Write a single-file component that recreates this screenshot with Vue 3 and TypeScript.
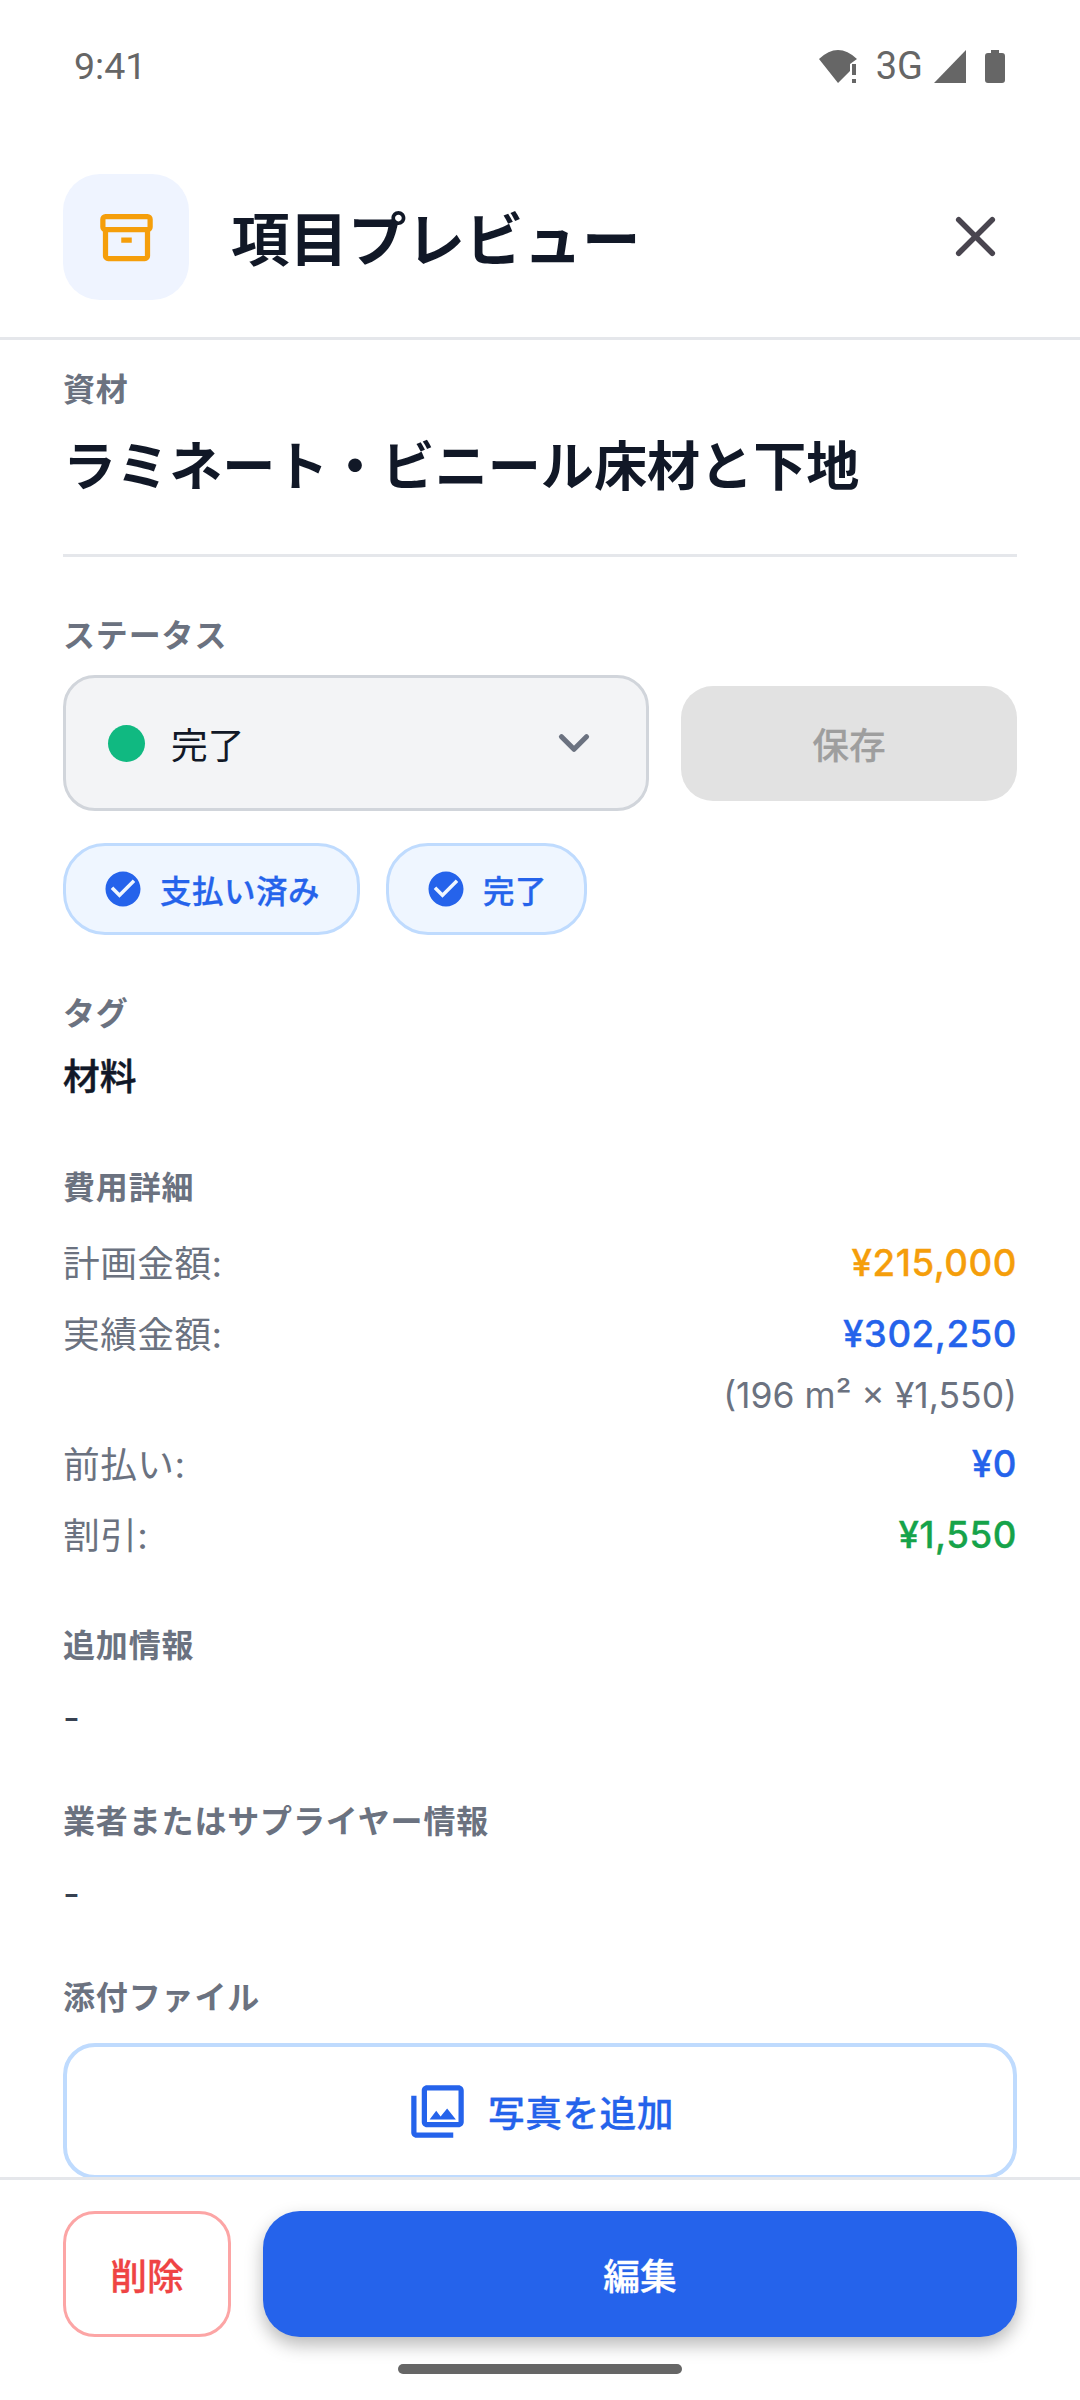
<script setup lang="ts">
const costs = [
  { label: '計画金額:', value: '¥215,000', tone: 'orange' },
  { label: '実績金額:', value: '¥302,250', tone: 'blue', note: '(196 m² × ¥1,550)' },
  { label: '前払い:', value: '¥0', tone: 'blue' },
  { label: '割引:', value: '¥1,550', tone: 'green' },
]
const chips = ['支払い済み', '完了']
</script>

<template>
  <div class="screen">
    <div class="status">
      <span class="time">9:41</span>
      <div class="status-icons">
        <svg width="38" height="33" viewBox="0 0 38 33">
          <path d="M0 9 Q19 -9 38 9 L31 14 V21 L19 33 Z" fill="#666" />
          <rect x="33" y="14" width="4" height="11" fill="#666" />
          <rect x="33" y="29" width="4" height="4" fill="#666" />
        </svg>
        <span class="net">3G</span>
        <svg class="signal" width="32" height="33" viewBox="0 0 32 33"><path d="M32 0 V33 H0 Z" fill="#666" /></svg>
        <svg class="battery" width="20" height="33" viewBox="0 0 20 33">
          <path d="M6 0 H14 V3 H17 Q20 3 20 6 V30 Q20 33 17 33 H3 Q0 33 0 30 V6 Q0 3 3 3 H6 Z" fill="#666" />
        </svg>
      </div>
    </div>

    <header class="head">
      <div class="head-icon">
        <svg width="63" height="63" viewBox="0 0 24 24" fill="none" stroke="#f59e0b" stroke-width="2" stroke-linejoin="round">
          <rect x="3" y="4" width="18" height="5" rx="1" />
          <path d="M4 9 V19 a1 1 0 0 0 1 1 H19 a1 1 0 0 0 1 -1 V9" />
          <path d="M10 13 H14" />
        </svg>
      </div>
      <h1>項目プレビュー</h1>
      <svg class="close" width="63" height="63" viewBox="0 0 24 24" fill="none" stroke="#49454f" stroke-width="2.100" stroke-linecap="round">
        <path d="M5.600 5.600 L18.400 18.400 M18.400 5.600 L5.600 18.400" />
      </svg>
    </header>

    <main class="body">
      <div class="label first">資材</div>
      <h2>ラミネート・ビニール床材と下地</h2>
      <div class="rule"></div>

      <div class="label status-label">ステータス</div>
      <div class="status-row">
        <div class="select">
          <span class="dot"></span>
          <span class="select-text">完了</span>
          <svg width="50" height="50" viewBox="0 0 24 24" fill="none" stroke="#6b7280" stroke-width="2.500" stroke-linecap="round" stroke-linejoin="round">
            <path d="M6 9 L12 15 L18 9" />
          </svg>
        </div>
        <button class="save">保存</button>
      </div>
      <div class="chips">
        <div v-for="chip in chips" :key="chip" class="chip">
          <svg width="42" height="42" viewBox="0 0 24 24" fill="#2563eb">
            <path d="M12 2C6.480 2 2 6.480 2 12s4.480 10 10 10 10-4.480 10-10S17.520 2 12 2zm-2 15l-5-5 1.410-1.410L10 14.170l7.590-7.590L19 8l-9 9z" />
          </svg>
          <span>{{ chip }}</span>
        </div>
      </div>

      <div class="label tag-label">タグ</div>
      <div class="tag">材料</div>

      <div class="label cost-label">費用詳細</div>
      <div class="costs">
        <template v-for="row in costs" :key="row.label">
          <div class="cost-row">
            <span class="cost-name">{{ row.label }}</span>
            <span class="cost-value" :class="row.tone">{{ row.value }}</span>
          </div>
          <div v-if="row.note" class="cost-note">{{ row.note }}</div>
        </template>
      </div>

      <div class="label info-label">追加情報</div>
      <div class="dash">-</div>
      <div class="label vendor-label">業者またはサプライヤー情報</div>
      <div class="dash">-</div>
      <div class="label attach-label">添付ファイル</div>
      <button class="add">
        <svg width="63" height="63" viewBox="0 0 24 24" fill="#2563eb">
          <path d="M20 4v12H8V4h12m0-2H8c-1.100 0-2 .9-2 2v12c0 1.100.9 2 2 2h12c1.100 0 2-.9 2-2V4c0-1.100-.9-2-2-2zm-8.500 9.670l1.690 2.260 2.480-3.100L19 15H9zM2 6v14c0 1.100.9 2 2 2h14v-2H4V6H2z" />
        </svg>
        <span>写真を追加</span>
      </button>
    </main>

    <footer class="foot">
      <button class="del">削除</button>
      <button class="edit">編集</button>
    </footer>
    <div class="home-bar"></div>
  </div>
</template>

<style scoped>
.screen {
  width: 1080px;
  height: 2400px;
  display: flex;
  flex-direction: column;
  position: relative;
  overflow: hidden;
  background: #fff;
  color: #111827;
  font-family: Inter, "Noto Sans CJK JP", sans-serif;
}
.status {
  height: 132px;
  flex: none;
  display: flex;
  align-items: center;
  justify-content: space-between;
  padding: 0 75px 0 74px;
  color: #666;
  font-family: Roboto, sans-serif;
  box-sizing: border-box;
}
.time {
  font-size: 37.500px;
}
.status-icons {
  display: flex;
  align-items: center;
}
.net {
  font-size: 38px;
  margin-left: 19px;
}
.signal {
  margin-left: 11px;
}
.battery {
  margin-left: 19px;
}
.head {
  height: 208px;
  flex: none;
  box-sizing: border-box;
  display: flex;
  align-items: flex-start;
  padding: 42px 63px 0;
  border-bottom: 3px solid #e5e7eb;
}
.head-icon {
  width: 126px;
  height: 126px;
  border-radius: 37px;
  background: #eff4ff;
  display: flex;
  align-items: center;
  justify-content: center;
  flex: none;
}
.head h1 {
  margin: 0 0 0 42px;
  flex: 1;
  font-size: 58.500px;
  line-height: 132px;
  font-weight: 700;
}
.close {
  margin: 31px 10px 0 0;
}
.body {
  flex: 1;
  min-height: 0;
  overflow: hidden;
  padding: 0 63px;
}
.label {
  font-size: 32px;
  line-height: 40px;
  font-weight: 600;
  color: #6b7280;
  letter-spacing: 0.85px;
}
.first {
  margin-top: 30px;
}
h2 {
  margin: 22px 0 0;
  font-size: 53.100px;
  line-height: 70px;
  font-weight: 700;
}
.rule {
  height: 3px;
  background: #e5e7eb;
  margin-top: 52px;
}
.status-label {
  margin-top: 59px;
}
.status-row {
  display: flex;
  align-items: center;
  gap: 32px;
  margin-top: 19px;
}
.select {
  width: 586px;
  height: 136px;
  box-sizing: border-box;
  border: 3px solid #d1d5db;
  border-radius: 32px;
  background: #f3f4f6;
  display: flex;
  align-items: center;
  padding: 0 47px 0 42px;
}
.dot {
  width: 37px;
  height: 37px;
  border-radius: 50%;
  background: #10b981;
}
.select-text {
  flex: 1;
  margin-left: 26px;
  font-size: 36.750px;
}
.save {
  flex: 1;
  height: 115px;
  border: 0;
  border-radius: 32px;
  background: #e2e2e2;
  color: #9e9e9e;
  font: 500 36.750px Inter, "Noto Sans CJK JP", sans-serif;
  -webkit-text-stroke: 0.2px currentColor;
}
.chips {
  display: flex;
  gap: 26px;
  margin-top: 32px;
}
.chip {
  height: 92px;
  box-sizing: border-box;
  border: 3px solid #bfdbfe;
  border-radius: 42px;
  background: #eff6ff;
  display: flex;
  align-items: center;
  gap: 16px;
  padding: 0 37px 0 36px;
  color: #2563eb;
  font-size: 31.500px;
  font-weight: 500;
  letter-spacing: 0.5px;
  -webkit-text-stroke: 0.3px currentColor;
}
.tag-label {
  margin-top: 59px;
}
.tag {
  margin-top: 18px;
  font-size: 36.750px;
  line-height: 50px;
  font-weight: 500;
  -webkit-text-stroke: 0.5px currentColor;
}
.cost-label {
  margin-top: 66px;
}
.costs {
  margin-top: 19px;
}
.cost-row {
  display: flex;
  justify-content: space-between;
  align-items: center;
  height: 70px;
  font-size: 36.750px;
  margin-top: 1px;
}
.cost-name {
  color: #6b7280;
  letter-spacing: 0.4px;
  margin-top: -3px;
}
.cost-value {
  font-weight: 500;
  letter-spacing: 0.5px;
  -webkit-text-stroke: 0.3px currentColor;
}
.orange {
  color: #f59e0b;
}
.blue {
  color: #2563eb;
}
.green {
  color: #16a34a;
}
.cost-note {
  text-align: right;
  font-size: 35.500px;
  line-height: 50px;
  color: #6b7280;
  margin: 3px 0 7px;
}
.info-label {
  margin-top: 57px;
}
.dash {
  margin-top: 30px;
  font-size: 36.750px;
  line-height: 44px;
  color: #374151;
}
.vendor-label {
  margin-top: 62px;
}
.attach-label {
  margin-top: 62px;
}
.add {
  width: 100%;
  height: 136px;
  margin-top: 25px;
  box-sizing: border-box;
  border: 4px solid #bfdbfe;
  border-radius: 32px;
  background: #fff;
  color: #2563eb;
  font: 500 36.750px Inter, "Noto Sans CJK JP", sans-serif;
  display: flex;
  align-items: center;
  justify-content: center;
  gap: 19px;
  letter-spacing: 0.4px;
  -webkit-text-stroke: 0.3px currentColor;
}
.foot {
  height: 223px;
  flex: none;
  box-sizing: border-box;
  border-top: 3px solid #e5e7eb;
  padding: 31px 63px 0;
  display: flex;
  align-items: flex-start;
  gap: 32px;
}
.del {
  width: 168px;
  height: 126px;
  box-sizing: border-box;
  border: 3px solid #fca5a5;
  border-radius: 32px;
  background: #fff;
  color: #ef4444;
  font: 500 36.750px Inter, "Noto Sans CJK JP", sans-serif;
  -webkit-text-stroke: 0.3px currentColor;
}
.edit {
  flex: 1;
  height: 126px;
  border: 0;
  border-radius: 37px;
  background: #2563eb;
  color: #fff;
  font: 500 36.750px Inter, "Noto Sans CJK JP", sans-serif;
  -webkit-text-stroke: 0.3px currentColor;
  box-shadow: 0 8px 18px rgba(0, 0, 0, 0.28);
}
.home-bar {
  position: absolute;
  left: 398px;
  top: 2364px;
  width: 284px;
  height: 10px;
  border-radius: 5px;
  background: #666;
}
</style>
